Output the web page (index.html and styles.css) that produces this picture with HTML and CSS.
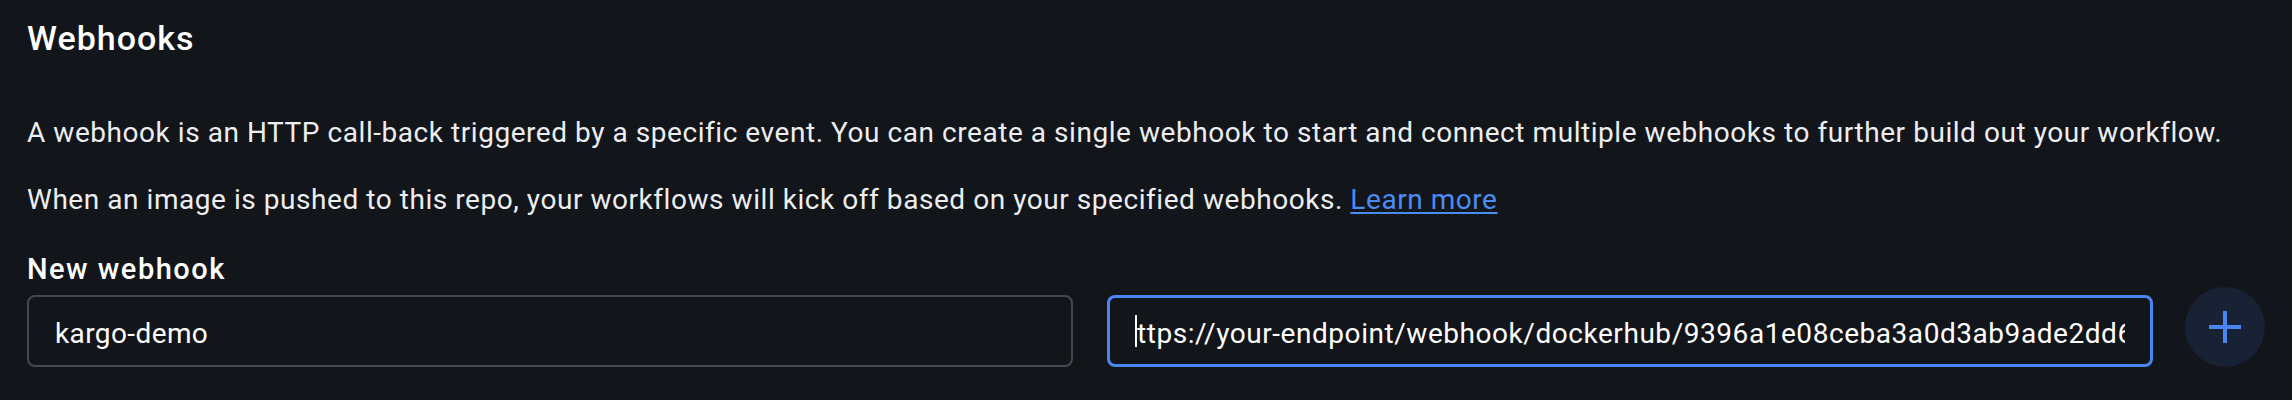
FILE: index.html
```html
<!DOCTYPE html>
<html lang="en">
<head>
<meta charset="utf-8">
<title>Webhooks</title>
<link rel="stylesheet" href="styles.css">
</head>
<body>
<section class="webhooks">
  <h2 class="title">Webhooks</h2>
  <p class="desc desc-first">A webhook is an HTTP call-back triggered by a specific event. You can create a single webhook to start and connect multiple webhooks to further build out your workflow.</p>
  <p class="desc desc-second">When an image is pushed to this repo, your workflows will kick off based on your specified webhooks. <a class="link" href="#">Learn more</a></p>
  <h3 class="label">New webhook</h3>
  <div class="row">
    <div class="field"><span class="field-text">kargo-demo</span></div>
    <div class="field field-focus"><span class="caret"></span><span class="field-text field-url">ttps://your-endpoint/webhook/dockerhub/9396a1e08ceba3a0d3ab9ade2dd6b3f7c1e2a4d5</span></div>
    <button class="add" type="button" aria-label="Add webhook">
      <svg width="32" height="32" viewBox="0 0 32 32"><path d="M16 0v32M0 16h32" stroke="#4a85f4" stroke-width="4"/></svg>
    </button>
  </div>
</section>
</body>
</html>
```
FILE: styles.css
```css
html, body {
  margin: 0;
  padding: 0;
  background: #121519;
}
body {
  font-family: Roboto, "Liberation Sans", sans-serif;
  color: #f1f2f4;
}
.webhooks {
  padding: 18px 28px 0 27px;
}
.title {
  margin: 0;
  font-size: 34px;
  line-height: 40px;
  font-weight: 500;
  letter-spacing: 1px;
  color: #ffffff;
}
.desc {
  margin: 0;
  font-size: 28px;
  line-height: 40px;
  font-weight: 400;
  letter-spacing: 0.55px;
  color: #eceef1;
}
.desc-first {
  margin-top: 55px;
}
.desc-second {
  margin-top: 27px;
}
.link {
  color: #4a8cf5;
  text-decoration: underline;
  text-underline-offset: 3px;
}
.label {
  margin: 32px 0 0;
  font-size: 29px;
  line-height: 35px;
  font-weight: 500;
  letter-spacing: 1.5px;
  color: #ffffff;
}
.row {
  display: flex;
  align-items: flex-end;
}
.field {
  box-sizing: border-box;
  flex: 0 0 1046px;
  height: 72px;
  border: 2px solid #45484e;
  border-radius: 8px;
  padding: 0 26px;
  display: flex;
  align-items: center;
  overflow: hidden;
  font-size: 28px;
  letter-spacing: 0.4px;
  color: #ffffff;
}
.field-focus {
  margin-left: 34px;
  border: 3px solid #4a85f4;
  padding: 0 25px;
}
.field-text {
  white-space: nowrap;
  overflow: hidden;
  padding-top: 4px;
}
.field-url {
  letter-spacing: 0.55px;
}
.caret {
  flex: 0 0 2px;
  width: 2px;
  height: 32px;
  background: #ffffff;
}
.add {
  margin-left: 32px;
  flex: 0 0 80px;
  width: 80px;
  height: 80px;
  border-radius: 50%;
  border: 0;
  padding: 0;
  background: #182234;
  display: flex;
  align-items: center;
  justify-content: center;
}
```
